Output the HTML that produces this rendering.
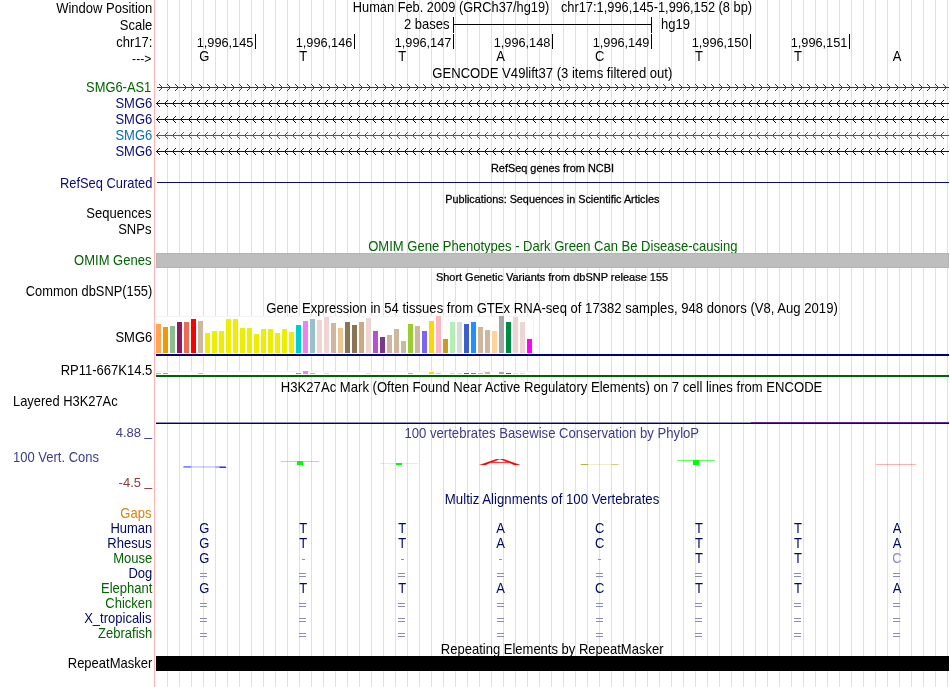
<!DOCTYPE html>
<html lang="en"><head><meta charset="utf-8"><title>UCSC Genome Browser - chr17:1,996,145-1,996,152</title>
<style>
html,body{margin:0;padding:0;background:#fff;}
body{width:950px;height:687px;overflow:hidden;}
svg{display:block;position:absolute;left:0;top:0;will-change:transform;}
text{font-family:"Liberation Sans", Arial, Helvetica, sans-serif;font-size:14px;white-space:pre;}
.r{text-anchor:end;}
.c{text-anchor:middle;}
.s{font-size:10px;stroke:#000;stroke-width:0.25px;}
.crisp{shape-rendering:crispEdges;}
</style></head><body>
<svg width="950" height="687" viewBox="0 0 950 687">
<rect x="0" y="0" width="950" height="687" fill="#fff"/>

<defs><clipPath id="dc"><rect x="156" y="0" width="793" height="687"/></clipPath></defs>
<g class="crisp" fill="#dcdcff">
<rect x="167" y="0" width="1" height="687"/>
<rect x="179" y="0" width="1" height="687"/>
<rect x="191" y="0" width="1" height="687"/>
<rect x="203" y="0" width="1" height="687"/>
<rect x="215" y="0" width="1" height="687"/>
<rect x="227" y="0" width="1" height="687"/>
<rect x="239" y="0" width="1" height="687"/>
<rect x="251" y="0" width="1" height="687"/>
<rect x="263" y="0" width="1" height="687"/>
<rect x="275" y="0" width="1" height="687"/>
<rect x="287" y="0" width="1" height="687"/>
<rect x="299" y="0" width="1" height="687"/>
<rect x="311" y="0" width="1" height="687"/>
<rect x="323" y="0" width="1" height="687"/>
<rect x="335" y="0" width="1" height="687"/>
<rect x="347" y="0" width="1" height="687"/>
<rect x="359" y="0" width="1" height="687"/>
<rect x="371" y="0" width="1" height="687"/>
<rect x="383" y="0" width="1" height="687"/>
<rect x="395" y="0" width="1" height="687"/>
<rect x="407" y="0" width="1" height="687"/>
<rect x="419" y="0" width="1" height="687"/>
<rect x="431" y="0" width="1" height="687"/>
<rect x="443" y="0" width="1" height="687"/>
<rect x="455" y="0" width="1" height="687"/>
<rect x="467" y="0" width="1" height="687"/>
<rect x="479" y="0" width="1" height="687"/>
<rect x="491" y="0" width="1" height="687"/>
<rect x="503" y="0" width="1" height="687"/>
<rect x="515" y="0" width="1" height="687"/>
<rect x="527" y="0" width="1" height="687"/>
<rect x="539" y="0" width="1" height="687"/>
<rect x="551" y="0" width="1" height="687"/>
<rect x="563" y="0" width="1" height="687"/>
<rect x="575" y="0" width="1" height="687"/>
<rect x="587" y="0" width="1" height="687"/>
<rect x="599" y="0" width="1" height="687"/>
<rect x="611" y="0" width="1" height="687"/>
<rect x="623" y="0" width="1" height="687"/>
<rect x="635" y="0" width="1" height="687"/>
<rect x="647" y="0" width="1" height="687"/>
<rect x="659" y="0" width="1" height="687"/>
<rect x="671" y="0" width="1" height="687"/>
<rect x="683" y="0" width="1" height="687"/>
<rect x="695" y="0" width="1" height="687"/>
<rect x="707" y="0" width="1" height="687"/>
<rect x="719" y="0" width="1" height="687"/>
<rect x="731" y="0" width="1" height="687"/>
<rect x="743" y="0" width="1" height="687"/>
<rect x="755" y="0" width="1" height="687"/>
<rect x="767" y="0" width="1" height="687"/>
<rect x="779" y="0" width="1" height="687"/>
<rect x="791" y="0" width="1" height="687"/>
<rect x="803" y="0" width="1" height="687"/>
<rect x="815" y="0" width="1" height="687"/>
<rect x="827" y="0" width="1" height="687"/>
<rect x="839" y="0" width="1" height="687"/>
<rect x="851" y="0" width="1" height="687"/>
<rect x="863" y="0" width="1" height="687"/>
<rect x="875" y="0" width="1" height="687"/>
<rect x="887" y="0" width="1" height="687"/>
<rect x="899" y="0" width="1" height="687"/>
<rect x="911" y="0" width="1" height="687"/>
<rect x="923" y="0" width="1" height="687"/>
<rect x="935" y="0" width="1" height="687"/>
<rect x="947" y="0" width="1" height="687"/>
</g>
<rect class="crisp" x="154" y="0" width="1" height="687" fill="#ffb4b4"/>
<text transform="translate(152.3 12.5) scale(0.93 1)" class="r">Window Position</text>
<text transform="translate(152.3 29.5) scale(0.93 1)" class="r">Scale</text>
<text transform="translate(152.3 47) scale(0.93 1)" class="r">chr17:</text>
<text transform="translate(151.3 63.3) scale(0.933 1)" class="r" style="font-size:13px">---&gt;</text>
<text transform="translate(352.78 12) scale(0.9164 1)">Human Feb. 2009 (GRCh37/hg19)</text>
<text transform="translate(560.9 12) scale(0.9176 1)">chr17:1,996,145-1,996,152 (8 bp)</text>
<text transform="translate(449.5 29.3) scale(0.93 1)" class="r">2 bases</text>
<text transform="translate(661 29.3) scale(0.93 1)">hg19</text>
<g class="crisp" fill="#000">
<rect x="453" y="17" width="1" height="16"/>
<rect x="651" y="17" width="1" height="16"/>
<rect x="453" y="24" width="199" height="1"/>
<rect x="255" y="34" width="1" height="15"/>
<rect x="354" y="34" width="1" height="15"/>
<rect x="453" y="34" width="1" height="15"/>
<rect x="552" y="34" width="1" height="15"/>
<rect x="651" y="34" width="1" height="15"/>
<rect x="750" y="34" width="1" height="15"/>
<rect x="849" y="34" width="1" height="15"/>
</g>
<text transform="translate(253.4 47.3) scale(0.982 1)" class="r" style="font-size:13px">1,996,145</text>
<text transform="translate(352.4 47.3) scale(0.982 1)" class="r" style="font-size:13px">1,996,146</text>
<text transform="translate(451.4 47.3) scale(0.982 1)" class="r" style="font-size:13px">1,996,147</text>
<text transform="translate(550.4 47.3) scale(0.982 1)" class="r" style="font-size:13px">1,996,148</text>
<text transform="translate(649.4 47.3) scale(0.982 1)" class="r" style="font-size:13px">1,996,149</text>
<text transform="translate(748.4 47.3) scale(0.982 1)" class="r" style="font-size:13px">1,996,150</text>
<text transform="translate(847.4 47.3) scale(0.982 1)" class="r" style="font-size:13px">1,996,151</text>
<text transform="translate(204.4 60.5) scale(0.93 1)" class="c">G</text>
<text transform="translate(303.2 60.5) scale(0.93 1)" class="c">T</text>
<text transform="translate(402.2 60.5) scale(0.93 1)" class="c">T</text>
<text transform="translate(500.5 60.5) scale(0.93 1)" class="c">A</text>
<text transform="translate(599.7 60.5) scale(0.93 1)" class="c">C</text>
<text transform="translate(698.9 60.5) scale(0.93 1)" class="c">T</text>
<text transform="translate(797.9 60.5) scale(0.93 1)" class="c">T</text>
<text transform="translate(897 60.5) scale(0.93 1)" class="c">A</text>
<text transform="translate(432.3 77.5) scale(0.9356 1)">GENCODE V49lift37 (3 items filtered out)</text>
<text transform="translate(151.3 92) scale(0.922 1)" class="r" style="fill:#006400">SMG6-AS1</text>
<rect class="crisp" x="157" y="87" width="792" height="1" fill="#006400"/>
<path clip-path="url(#dc)" d="M159.0 84L162.5 87.5L159.0 91M167.0 84L170.5 87.5L167.0 91M175.0 84L178.5 87.5L175.0 91M183.0 84L186.5 87.5L183.0 91M191.0 84L194.5 87.5L191.0 91M199.0 84L202.5 87.5L199.0 91M207.0 84L210.5 87.5L207.0 91M215.0 84L218.5 87.5L215.0 91M223.0 84L226.5 87.5L223.0 91M231.0 84L234.5 87.5L231.0 91M239.0 84L242.5 87.5L239.0 91M247.0 84L250.5 87.5L247.0 91M255.0 84L258.5 87.5L255.0 91M263.0 84L266.5 87.5L263.0 91M271.0 84L274.5 87.5L271.0 91M279.0 84L282.5 87.5L279.0 91M287.0 84L290.5 87.5L287.0 91M295.0 84L298.5 87.5L295.0 91M303.0 84L306.5 87.5L303.0 91M311.0 84L314.5 87.5L311.0 91M319.0 84L322.5 87.5L319.0 91M327.0 84L330.5 87.5L327.0 91M335.0 84L338.5 87.5L335.0 91M343.0 84L346.5 87.5L343.0 91M351.0 84L354.5 87.5L351.0 91M359.0 84L362.5 87.5L359.0 91M367.0 84L370.5 87.5L367.0 91M375.0 84L378.5 87.5L375.0 91M383.0 84L386.5 87.5L383.0 91M391.0 84L394.5 87.5L391.0 91M399.0 84L402.5 87.5L399.0 91M407.0 84L410.5 87.5L407.0 91M415.0 84L418.5 87.5L415.0 91M423.0 84L426.5 87.5L423.0 91M431.0 84L434.5 87.5L431.0 91M439.0 84L442.5 87.5L439.0 91M447.0 84L450.5 87.5L447.0 91M455.0 84L458.5 87.5L455.0 91M463.0 84L466.5 87.5L463.0 91M471.0 84L474.5 87.5L471.0 91M479.0 84L482.5 87.5L479.0 91M487.0 84L490.5 87.5L487.0 91M495.0 84L498.5 87.5L495.0 91M503.0 84L506.5 87.5L503.0 91M511.0 84L514.5 87.5L511.0 91M519.0 84L522.5 87.5L519.0 91M527.0 84L530.5 87.5L527.0 91M535.0 84L538.5 87.5L535.0 91M543.0 84L546.5 87.5L543.0 91M551.0 84L554.5 87.5L551.0 91M559.0 84L562.5 87.5L559.0 91M567.0 84L570.5 87.5L567.0 91M575.0 84L578.5 87.5L575.0 91M583.0 84L586.5 87.5L583.0 91M591.0 84L594.5 87.5L591.0 91M599.0 84L602.5 87.5L599.0 91M607.0 84L610.5 87.5L607.0 91M615.0 84L618.5 87.5L615.0 91M623.0 84L626.5 87.5L623.0 91M631.0 84L634.5 87.5L631.0 91M639.0 84L642.5 87.5L639.0 91M647.0 84L650.5 87.5L647.0 91M655.0 84L658.5 87.5L655.0 91M663.0 84L666.5 87.5L663.0 91M671.0 84L674.5 87.5L671.0 91M679.0 84L682.5 87.5L679.0 91M687.0 84L690.5 87.5L687.0 91M695.0 84L698.5 87.5L695.0 91M703.0 84L706.5 87.5L703.0 91M711.0 84L714.5 87.5L711.0 91M719.0 84L722.5 87.5L719.0 91M727.0 84L730.5 87.5L727.0 91M735.0 84L738.5 87.5L735.0 91M743.0 84L746.5 87.5L743.0 91M751.0 84L754.5 87.5L751.0 91M759.0 84L762.5 87.5L759.0 91M767.0 84L770.5 87.5L767.0 91M775.0 84L778.5 87.5L775.0 91M783.0 84L786.5 87.5L783.0 91M791.0 84L794.5 87.5L791.0 91M799.0 84L802.5 87.5L799.0 91M807.0 84L810.5 87.5L807.0 91M815.0 84L818.5 87.5L815.0 91M823.0 84L826.5 87.5L823.0 91M831.0 84L834.5 87.5L831.0 91M839.0 84L842.5 87.5L839.0 91M847.0 84L850.5 87.5L847.0 91M855.0 84L858.5 87.5L855.0 91M863.0 84L866.5 87.5L863.0 91M871.0 84L874.5 87.5L871.0 91M879.0 84L882.5 87.5L879.0 91M887.0 84L890.5 87.5L887.0 91M895.0 84L898.5 87.5L895.0 91M903.0 84L906.5 87.5L903.0 91M911.0 84L914.5 87.5L911.0 91M919.0 84L922.5 87.5L919.0 91M927.0 84L930.5 87.5L927.0 91M935.0 84L938.5 87.5L935.0 91M943.0 84L946.5 87.5L943.0 91" fill="none" stroke="#006400" stroke-width="1"/>
<text transform="translate(152.3 108) scale(0.93 1)" class="r" style="fill:#0c0c78">SMG6</text>
<rect class="crisp" x="156" y="103" width="793" height="1" fill="#0c0c78"/>
<path clip-path="url(#dc)" d="M160.0 100L156.5 103.5L160.0 107M168.0 100L164.5 103.5L168.0 107M176.0 100L172.5 103.5L176.0 107M184.0 100L180.5 103.5L184.0 107M192.0 100L188.5 103.5L192.0 107M200.0 100L196.5 103.5L200.0 107M208.0 100L204.5 103.5L208.0 107M216.0 100L212.5 103.5L216.0 107M224.0 100L220.5 103.5L224.0 107M232.0 100L228.5 103.5L232.0 107M240.0 100L236.5 103.5L240.0 107M248.0 100L244.5 103.5L248.0 107M256.0 100L252.5 103.5L256.0 107M264.0 100L260.5 103.5L264.0 107M272.0 100L268.5 103.5L272.0 107M280.0 100L276.5 103.5L280.0 107M288.0 100L284.5 103.5L288.0 107M296.0 100L292.5 103.5L296.0 107M304.0 100L300.5 103.5L304.0 107M312.0 100L308.5 103.5L312.0 107M320.0 100L316.5 103.5L320.0 107M328.0 100L324.5 103.5L328.0 107M336.0 100L332.5 103.5L336.0 107M344.0 100L340.5 103.5L344.0 107M352.0 100L348.5 103.5L352.0 107M360.0 100L356.5 103.5L360.0 107M368.0 100L364.5 103.5L368.0 107M376.0 100L372.5 103.5L376.0 107M384.0 100L380.5 103.5L384.0 107M392.0 100L388.5 103.5L392.0 107M400.0 100L396.5 103.5L400.0 107M408.0 100L404.5 103.5L408.0 107M416.0 100L412.5 103.5L416.0 107M424.0 100L420.5 103.5L424.0 107M432.0 100L428.5 103.5L432.0 107M440.0 100L436.5 103.5L440.0 107M448.0 100L444.5 103.5L448.0 107M456.0 100L452.5 103.5L456.0 107M464.0 100L460.5 103.5L464.0 107M472.0 100L468.5 103.5L472.0 107M480.0 100L476.5 103.5L480.0 107M488.0 100L484.5 103.5L488.0 107M496.0 100L492.5 103.5L496.0 107M504.0 100L500.5 103.5L504.0 107M512.0 100L508.5 103.5L512.0 107M520.0 100L516.5 103.5L520.0 107M528.0 100L524.5 103.5L528.0 107M536.0 100L532.5 103.5L536.0 107M544.0 100L540.5 103.5L544.0 107M552.0 100L548.5 103.5L552.0 107M560.0 100L556.5 103.5L560.0 107M568.0 100L564.5 103.5L568.0 107M576.0 100L572.5 103.5L576.0 107M584.0 100L580.5 103.5L584.0 107M592.0 100L588.5 103.5L592.0 107M600.0 100L596.5 103.5L600.0 107M608.0 100L604.5 103.5L608.0 107M616.0 100L612.5 103.5L616.0 107M624.0 100L620.5 103.5L624.0 107M632.0 100L628.5 103.5L632.0 107M640.0 100L636.5 103.5L640.0 107M648.0 100L644.5 103.5L648.0 107M656.0 100L652.5 103.5L656.0 107M664.0 100L660.5 103.5L664.0 107M672.0 100L668.5 103.5L672.0 107M680.0 100L676.5 103.5L680.0 107M688.0 100L684.5 103.5L688.0 107M696.0 100L692.5 103.5L696.0 107M704.0 100L700.5 103.5L704.0 107M712.0 100L708.5 103.5L712.0 107M720.0 100L716.5 103.5L720.0 107M728.0 100L724.5 103.5L728.0 107M736.0 100L732.5 103.5L736.0 107M744.0 100L740.5 103.5L744.0 107M752.0 100L748.5 103.5L752.0 107M760.0 100L756.5 103.5L760.0 107M768.0 100L764.5 103.5L768.0 107M776.0 100L772.5 103.5L776.0 107M784.0 100L780.5 103.5L784.0 107M792.0 100L788.5 103.5L792.0 107M800.0 100L796.5 103.5L800.0 107M808.0 100L804.5 103.5L808.0 107M816.0 100L812.5 103.5L816.0 107M824.0 100L820.5 103.5L824.0 107M832.0 100L828.5 103.5L832.0 107M840.0 100L836.5 103.5L840.0 107M848.0 100L844.5 103.5L848.0 107M856.0 100L852.5 103.5L856.0 107M864.0 100L860.5 103.5L864.0 107M872.0 100L868.5 103.5L872.0 107M880.0 100L876.5 103.5L880.0 107M888.0 100L884.5 103.5L888.0 107M896.0 100L892.5 103.5L896.0 107M904.0 100L900.5 103.5L904.0 107M912.0 100L908.5 103.5L912.0 107M920.0 100L916.5 103.5L920.0 107M928.0 100L924.5 103.5L928.0 107M936.0 100L932.5 103.5L936.0 107M944.0 100L940.5 103.5L944.0 107M952.0 100L948.5 103.5L952.0 107" fill="none" stroke="#0c0c78" stroke-width="1"/>
<text transform="translate(152.3 124) scale(0.93 1)" class="r" style="fill:#0c0c78">SMG6</text>
<rect class="crisp" x="156" y="119" width="793" height="1" fill="#0c0c78"/>
<path clip-path="url(#dc)" d="M160.0 116L156.5 119.5L160.0 123M168.0 116L164.5 119.5L168.0 123M176.0 116L172.5 119.5L176.0 123M184.0 116L180.5 119.5L184.0 123M192.0 116L188.5 119.5L192.0 123M200.0 116L196.5 119.5L200.0 123M208.0 116L204.5 119.5L208.0 123M216.0 116L212.5 119.5L216.0 123M224.0 116L220.5 119.5L224.0 123M232.0 116L228.5 119.5L232.0 123M240.0 116L236.5 119.5L240.0 123M248.0 116L244.5 119.5L248.0 123M256.0 116L252.5 119.5L256.0 123M264.0 116L260.5 119.5L264.0 123M272.0 116L268.5 119.5L272.0 123M280.0 116L276.5 119.5L280.0 123M288.0 116L284.5 119.5L288.0 123M296.0 116L292.5 119.5L296.0 123M304.0 116L300.5 119.5L304.0 123M312.0 116L308.5 119.5L312.0 123M320.0 116L316.5 119.5L320.0 123M328.0 116L324.5 119.5L328.0 123M336.0 116L332.5 119.5L336.0 123M344.0 116L340.5 119.5L344.0 123M352.0 116L348.5 119.5L352.0 123M360.0 116L356.5 119.5L360.0 123M368.0 116L364.5 119.5L368.0 123M376.0 116L372.5 119.5L376.0 123M384.0 116L380.5 119.5L384.0 123M392.0 116L388.5 119.5L392.0 123M400.0 116L396.5 119.5L400.0 123M408.0 116L404.5 119.5L408.0 123M416.0 116L412.5 119.5L416.0 123M424.0 116L420.5 119.5L424.0 123M432.0 116L428.5 119.5L432.0 123M440.0 116L436.5 119.5L440.0 123M448.0 116L444.5 119.5L448.0 123M456.0 116L452.5 119.5L456.0 123M464.0 116L460.5 119.5L464.0 123M472.0 116L468.5 119.5L472.0 123M480.0 116L476.5 119.5L480.0 123M488.0 116L484.5 119.5L488.0 123M496.0 116L492.5 119.5L496.0 123M504.0 116L500.5 119.5L504.0 123M512.0 116L508.5 119.5L512.0 123M520.0 116L516.5 119.5L520.0 123M528.0 116L524.5 119.5L528.0 123M536.0 116L532.5 119.5L536.0 123M544.0 116L540.5 119.5L544.0 123M552.0 116L548.5 119.5L552.0 123M560.0 116L556.5 119.5L560.0 123M568.0 116L564.5 119.5L568.0 123M576.0 116L572.5 119.5L576.0 123M584.0 116L580.5 119.5L584.0 123M592.0 116L588.5 119.5L592.0 123M600.0 116L596.5 119.5L600.0 123M608.0 116L604.5 119.5L608.0 123M616.0 116L612.5 119.5L616.0 123M624.0 116L620.5 119.5L624.0 123M632.0 116L628.5 119.5L632.0 123M640.0 116L636.5 119.5L640.0 123M648.0 116L644.5 119.5L648.0 123M656.0 116L652.5 119.5L656.0 123M664.0 116L660.5 119.5L664.0 123M672.0 116L668.5 119.5L672.0 123M680.0 116L676.5 119.5L680.0 123M688.0 116L684.5 119.5L688.0 123M696.0 116L692.5 119.5L696.0 123M704.0 116L700.5 119.5L704.0 123M712.0 116L708.5 119.5L712.0 123M720.0 116L716.5 119.5L720.0 123M728.0 116L724.5 119.5L728.0 123M736.0 116L732.5 119.5L736.0 123M744.0 116L740.5 119.5L744.0 123M752.0 116L748.5 119.5L752.0 123M760.0 116L756.5 119.5L760.0 123M768.0 116L764.5 119.5L768.0 123M776.0 116L772.5 119.5L776.0 123M784.0 116L780.5 119.5L784.0 123M792.0 116L788.5 119.5L792.0 123M800.0 116L796.5 119.5L800.0 123M808.0 116L804.5 119.5L808.0 123M816.0 116L812.5 119.5L816.0 123M824.0 116L820.5 119.5L824.0 123M832.0 116L828.5 119.5L832.0 123M840.0 116L836.5 119.5L840.0 123M848.0 116L844.5 119.5L848.0 123M856.0 116L852.5 119.5L856.0 123M864.0 116L860.5 119.5L864.0 123M872.0 116L868.5 119.5L872.0 123M880.0 116L876.5 119.5L880.0 123M888.0 116L884.5 119.5L888.0 123M896.0 116L892.5 119.5L896.0 123M904.0 116L900.5 119.5L904.0 123M912.0 116L908.5 119.5L912.0 123M920.0 116L916.5 119.5L920.0 123M928.0 116L924.5 119.5L928.0 123M936.0 116L932.5 119.5L936.0 123M944.0 116L940.5 119.5L944.0 123M952.0 116L948.5 119.5L952.0 123" fill="none" stroke="#0c0c78" stroke-width="1"/>
<text transform="translate(152.3 140) scale(0.93 1)" class="r" style="fill:#0a6eaa">SMG6</text>
<rect class="crisp" x="156" y="135" width="793" height="1" fill="#0a6eaa"/>
<path clip-path="url(#dc)" d="M160.0 132L156.5 135.5L160.0 139M168.0 132L164.5 135.5L168.0 139M176.0 132L172.5 135.5L176.0 139M184.0 132L180.5 135.5L184.0 139M192.0 132L188.5 135.5L192.0 139M200.0 132L196.5 135.5L200.0 139M208.0 132L204.5 135.5L208.0 139M216.0 132L212.5 135.5L216.0 139M224.0 132L220.5 135.5L224.0 139M232.0 132L228.5 135.5L232.0 139M240.0 132L236.5 135.5L240.0 139M248.0 132L244.5 135.5L248.0 139M256.0 132L252.5 135.5L256.0 139M264.0 132L260.5 135.5L264.0 139M272.0 132L268.5 135.5L272.0 139M280.0 132L276.5 135.5L280.0 139M288.0 132L284.5 135.5L288.0 139M296.0 132L292.5 135.5L296.0 139M304.0 132L300.5 135.5L304.0 139M312.0 132L308.5 135.5L312.0 139M320.0 132L316.5 135.5L320.0 139M328.0 132L324.5 135.5L328.0 139M336.0 132L332.5 135.5L336.0 139M344.0 132L340.5 135.5L344.0 139M352.0 132L348.5 135.5L352.0 139M360.0 132L356.5 135.5L360.0 139M368.0 132L364.5 135.5L368.0 139M376.0 132L372.5 135.5L376.0 139M384.0 132L380.5 135.5L384.0 139M392.0 132L388.5 135.5L392.0 139M400.0 132L396.5 135.5L400.0 139M408.0 132L404.5 135.5L408.0 139M416.0 132L412.5 135.5L416.0 139M424.0 132L420.5 135.5L424.0 139M432.0 132L428.5 135.5L432.0 139M440.0 132L436.5 135.5L440.0 139M448.0 132L444.5 135.5L448.0 139M456.0 132L452.5 135.5L456.0 139M464.0 132L460.5 135.5L464.0 139M472.0 132L468.5 135.5L472.0 139M480.0 132L476.5 135.5L480.0 139M488.0 132L484.5 135.5L488.0 139M496.0 132L492.5 135.5L496.0 139M504.0 132L500.5 135.5L504.0 139M512.0 132L508.5 135.5L512.0 139M520.0 132L516.5 135.5L520.0 139M528.0 132L524.5 135.5L528.0 139M536.0 132L532.5 135.5L536.0 139M544.0 132L540.5 135.5L544.0 139M552.0 132L548.5 135.5L552.0 139M560.0 132L556.5 135.5L560.0 139M568.0 132L564.5 135.5L568.0 139M576.0 132L572.5 135.5L576.0 139M584.0 132L580.5 135.5L584.0 139M592.0 132L588.5 135.5L592.0 139M600.0 132L596.5 135.5L600.0 139M608.0 132L604.5 135.5L608.0 139M616.0 132L612.5 135.5L616.0 139M624.0 132L620.5 135.5L624.0 139M632.0 132L628.5 135.5L632.0 139M640.0 132L636.5 135.5L640.0 139M648.0 132L644.5 135.5L648.0 139M656.0 132L652.5 135.5L656.0 139M664.0 132L660.5 135.5L664.0 139M672.0 132L668.5 135.5L672.0 139M680.0 132L676.5 135.5L680.0 139M688.0 132L684.5 135.5L688.0 139M696.0 132L692.5 135.5L696.0 139M704.0 132L700.5 135.5L704.0 139M712.0 132L708.5 135.5L712.0 139M720.0 132L716.5 135.5L720.0 139M728.0 132L724.5 135.5L728.0 139M736.0 132L732.5 135.5L736.0 139M744.0 132L740.5 135.5L744.0 139M752.0 132L748.5 135.5L752.0 139M760.0 132L756.5 135.5L760.0 139M768.0 132L764.5 135.5L768.0 139M776.0 132L772.5 135.5L776.0 139M784.0 132L780.5 135.5L784.0 139M792.0 132L788.5 135.5L792.0 139M800.0 132L796.5 135.5L800.0 139M808.0 132L804.5 135.5L808.0 139M816.0 132L812.5 135.5L816.0 139M824.0 132L820.5 135.5L824.0 139M832.0 132L828.5 135.5L832.0 139M840.0 132L836.5 135.5L840.0 139M848.0 132L844.5 135.5L848.0 139M856.0 132L852.5 135.5L856.0 139M864.0 132L860.5 135.5L864.0 139M872.0 132L868.5 135.5L872.0 139M880.0 132L876.5 135.5L880.0 139M888.0 132L884.5 135.5L888.0 139M896.0 132L892.5 135.5L896.0 139M904.0 132L900.5 135.5L904.0 139M912.0 132L908.5 135.5L912.0 139M920.0 132L916.5 135.5L920.0 139M928.0 132L924.5 135.5L928.0 139M936.0 132L932.5 135.5L936.0 139M944.0 132L940.5 135.5L944.0 139M952.0 132L948.5 135.5L952.0 139" fill="none" stroke="#0a6eaa" stroke-width="1"/>
<text transform="translate(152.3 156) scale(0.93 1)" class="r" style="fill:#0c0c78">SMG6</text>
<rect class="crisp" x="156" y="151" width="793" height="1" fill="#0c0c78"/>
<path clip-path="url(#dc)" d="M160.0 148L156.5 151.5L160.0 155M168.0 148L164.5 151.5L168.0 155M176.0 148L172.5 151.5L176.0 155M184.0 148L180.5 151.5L184.0 155M192.0 148L188.5 151.5L192.0 155M200.0 148L196.5 151.5L200.0 155M208.0 148L204.5 151.5L208.0 155M216.0 148L212.5 151.5L216.0 155M224.0 148L220.5 151.5L224.0 155M232.0 148L228.5 151.5L232.0 155M240.0 148L236.5 151.5L240.0 155M248.0 148L244.5 151.5L248.0 155M256.0 148L252.5 151.5L256.0 155M264.0 148L260.5 151.5L264.0 155M272.0 148L268.5 151.5L272.0 155M280.0 148L276.5 151.5L280.0 155M288.0 148L284.5 151.5L288.0 155M296.0 148L292.5 151.5L296.0 155M304.0 148L300.5 151.5L304.0 155M312.0 148L308.5 151.5L312.0 155M320.0 148L316.5 151.5L320.0 155M328.0 148L324.5 151.5L328.0 155M336.0 148L332.5 151.5L336.0 155M344.0 148L340.5 151.5L344.0 155M352.0 148L348.5 151.5L352.0 155M360.0 148L356.5 151.5L360.0 155M368.0 148L364.5 151.5L368.0 155M376.0 148L372.5 151.5L376.0 155M384.0 148L380.5 151.5L384.0 155M392.0 148L388.5 151.5L392.0 155M400.0 148L396.5 151.5L400.0 155M408.0 148L404.5 151.5L408.0 155M416.0 148L412.5 151.5L416.0 155M424.0 148L420.5 151.5L424.0 155M432.0 148L428.5 151.5L432.0 155M440.0 148L436.5 151.5L440.0 155M448.0 148L444.5 151.5L448.0 155M456.0 148L452.5 151.5L456.0 155M464.0 148L460.5 151.5L464.0 155M472.0 148L468.5 151.5L472.0 155M480.0 148L476.5 151.5L480.0 155M488.0 148L484.5 151.5L488.0 155M496.0 148L492.5 151.5L496.0 155M504.0 148L500.5 151.5L504.0 155M512.0 148L508.5 151.5L512.0 155M520.0 148L516.5 151.5L520.0 155M528.0 148L524.5 151.5L528.0 155M536.0 148L532.5 151.5L536.0 155M544.0 148L540.5 151.5L544.0 155M552.0 148L548.5 151.5L552.0 155M560.0 148L556.5 151.5L560.0 155M568.0 148L564.5 151.5L568.0 155M576.0 148L572.5 151.5L576.0 155M584.0 148L580.5 151.5L584.0 155M592.0 148L588.5 151.5L592.0 155M600.0 148L596.5 151.5L600.0 155M608.0 148L604.5 151.5L608.0 155M616.0 148L612.5 151.5L616.0 155M624.0 148L620.5 151.5L624.0 155M632.0 148L628.5 151.5L632.0 155M640.0 148L636.5 151.5L640.0 155M648.0 148L644.5 151.5L648.0 155M656.0 148L652.5 151.5L656.0 155M664.0 148L660.5 151.5L664.0 155M672.0 148L668.5 151.5L672.0 155M680.0 148L676.5 151.5L680.0 155M688.0 148L684.5 151.5L688.0 155M696.0 148L692.5 151.5L696.0 155M704.0 148L700.5 151.5L704.0 155M712.0 148L708.5 151.5L712.0 155M720.0 148L716.5 151.5L720.0 155M728.0 148L724.5 151.5L728.0 155M736.0 148L732.5 151.5L736.0 155M744.0 148L740.5 151.5L744.0 155M752.0 148L748.5 151.5L752.0 155M760.0 148L756.5 151.5L760.0 155M768.0 148L764.5 151.5L768.0 155M776.0 148L772.5 151.5L776.0 155M784.0 148L780.5 151.5L784.0 155M792.0 148L788.5 151.5L792.0 155M800.0 148L796.5 151.5L800.0 155M808.0 148L804.5 151.5L808.0 155M816.0 148L812.5 151.5L816.0 155M824.0 148L820.5 151.5L824.0 155M832.0 148L828.5 151.5L832.0 155M840.0 148L836.5 151.5L840.0 155M848.0 148L844.5 151.5L848.0 155M856.0 148L852.5 151.5L856.0 155M864.0 148L860.5 151.5L864.0 155M872.0 148L868.5 151.5L872.0 155M880.0 148L876.5 151.5L880.0 155M888.0 148L884.5 151.5L888.0 155M896.0 148L892.5 151.5L896.0 155M904.0 148L900.5 151.5L904.0 155M912.0 148L908.5 151.5L912.0 155M920.0 148L916.5 151.5L920.0 155M928.0 148L924.5 151.5L928.0 155M936.0 148L932.5 151.5L936.0 155M944.0 148L940.5 151.5L944.0 155M952.0 148L948.5 151.5L952.0 155" fill="none" stroke="#0c0c78" stroke-width="1"/>
<text transform="translate(491.0 172) scale(1.0906 1)" class="s">RefSeq genes from NCBI</text>
<text transform="translate(152.3 187.5) scale(0.921 1)" class="r" style="fill:#0c0c78">RefSeq Curated</text>
<rect class="crisp" x="157" y="182" width="792" height="1" fill="#0c0c78"/>
<text transform="translate(445.3 202.8) scale(1.084 1)" class="s">Publications: Sequences in Scientific Articles</text>
<text transform="translate(151.4 218) scale(0.93 1)" class="r">Sequences</text>
<text transform="translate(151.4 234) scale(0.93 1)" class="r">SNPs</text>
<text transform="translate(368.2 250.7) scale(0.9309 1)" style="fill:#046404">OMIM Gene Phenotypes - Dark Green Can Be Disease-causing</text>
<text transform="translate(151.4 265) scale(0.93 1)" class="r" style="fill:#046404">OMIM Genes</text>
<rect class="crisp" x="156" y="253" width="793" height="15" fill="#b4b4b4"/><rect class="crisp" x="157" y="254" width="791" height="13" fill="#bebebe"/>
<text transform="translate(435.9 281) scale(1.096 1)" class="s">Short Genetic Variants from dbSNP release 155</text>
<text transform="translate(152.3 296) scale(0.919 1)" class="r">Common dbSNP(155)</text>
<text transform="translate(266.3 312.6) scale(0.9367 1)">Gene Expression in 54 tissues from GTEx RNA-seq of 17382 samples, 948 donors (V8, Aug 2019)</text>
<text transform="translate(152.3 342.3) scale(0.93 1)" class="r">SMG6</text>
<text transform="translate(152.3 374.6) scale(0.93 1)" class="r">RP11-667K14.5</text>
<g class="crisp">
<rect x="156" y="316" width="378" height="38" fill="#f4f4f4"/><rect x="157" y="317" width="376" height="37" fill="#fff"/>
<rect x="156" y="324" width="5" height="29" fill="#FFA54F"/>
<rect x="163" y="327" width="5" height="26" fill="#EE9A00"/>
<rect x="170" y="326" width="5" height="27" fill="#8FBC8F"/>
<rect x="177" y="322" width="5" height="31" fill="#8B1C62"/>
<rect x="184" y="322" width="5" height="31" fill="#EE6A50"/>
<rect x="191" y="319" width="5" height="34" fill="#FF0000"/>
<rect x="198" y="321" width="5" height="32" fill="#CDB79E"/>
<rect x="205" y="333" width="5" height="20" fill="#EEEE00"/>
<rect x="212" y="331" width="5" height="22" fill="#EEEE00"/>
<rect x="219" y="331" width="5" height="22" fill="#EEEE00"/>
<rect x="226" y="319" width="5" height="34" fill="#EEEE00"/>
<rect x="233" y="319" width="5" height="34" fill="#EEEE00"/>
<rect x="240" y="328" width="5" height="25" fill="#EEEE00"/>
<rect x="247" y="328" width="5" height="25" fill="#EEEE00"/>
<rect x="254" y="334" width="5" height="19" fill="#EEEE00"/>
<rect x="261" y="329" width="5" height="24" fill="#EEEE00"/>
<rect x="268" y="329" width="5" height="24" fill="#EEEE00"/>
<rect x="275" y="333" width="5" height="20" fill="#EEEE00"/>
<rect x="282" y="329" width="5" height="24" fill="#EEEE00"/>
<rect x="289" y="332" width="5" height="21" fill="#EEEE00"/>
<rect x="296" y="325" width="5" height="28" fill="#00CDCD"/>
<rect x="303" y="321" width="5" height="32" fill="#EE82EE"/>
<rect x="310" y="319" width="5" height="34" fill="#9AC0CD"/>
<rect x="317" y="320" width="5" height="33" fill="#EED5D2"/>
<rect x="324" y="317" width="5" height="36" fill="#EED5D2"/>
<rect x="331" y="323" width="5" height="30" fill="#CDB79E"/>
<rect x="338" y="328" width="5" height="25" fill="#EEC591"/>
<rect x="345" y="322" width="5" height="31" fill="#8B7355"/>
<rect x="352" y="325" width="5" height="28" fill="#8B7355"/>
<rect x="359" y="322" width="5" height="31" fill="#CDAA7D"/>
<rect x="366" y="318" width="5" height="35" fill="#EED5D2"/>
<rect x="373" y="331" width="5" height="22" fill="#B452CD"/>
<rect x="380" y="337" width="5" height="16" fill="#7A378B"/>
<rect x="387" y="335" width="5" height="18" fill="#CDB79E"/>
<rect x="394" y="329" width="5" height="24" fill="#CDB79E"/>
<rect x="401" y="341" width="5" height="12" fill="#CDB79E"/>
<rect x="408" y="324" width="5" height="29" fill="#9ACD32"/>
<rect x="415" y="326" width="5" height="27" fill="#CDB79E"/>
<rect x="422" y="331" width="5" height="22" fill="#7A67EE"/>
<rect x="429" y="321" width="5" height="32" fill="#FFD700"/>
<rect x="436" y="316" width="5" height="37" fill="#FFB6C1"/>
<rect x="443" y="339" width="5" height="14" fill="#CD9B1D"/>
<rect x="450" y="322" width="5" height="31" fill="#B4EEB4"/>
<rect x="457" y="322" width="5" height="31" fill="#D9D9D9"/>
<rect x="464" y="324" width="5" height="29" fill="#3A5FCD"/>
<rect x="471" y="322" width="5" height="31" fill="#1E90FF"/>
<rect x="478" y="327" width="5" height="26" fill="#CDB79E"/>
<rect x="485" y="330" width="5" height="23" fill="#CDB79E"/>
<rect x="492" y="331" width="5" height="22" fill="#FFD39B"/>
<rect x="499" y="316" width="5" height="37" fill="#A6A6A6"/>
<rect x="506" y="322" width="5" height="31" fill="#008B45"/>
<rect x="513" y="317" width="5" height="36" fill="#EED5D2"/>
<rect x="520" y="322" width="5" height="31" fill="#EED5D2"/>
<rect x="527" y="339" width="5" height="14" fill="#FF00FF"/>
<rect x="156" y="354" width="793" height="2" fill="#000078"/>
<rect x="156" y="371" width="378" height="4" fill="#f4f4f4"/><rect x="157" y="372" width="376" height="3" fill="#fff"/>
<rect x="156" y="373" width="5" height="1" fill="#FFA54F"/>
<rect x="163" y="373" width="5" height="1" fill="#EE9A00"/>
<rect x="198" y="373" width="5" height="1" fill="#CDB79E"/>
<rect x="296" y="373" width="5" height="1" fill="#00CDCD"/>
<rect x="303" y="371" width="5" height="3" fill="#EE82EE"/>
<rect x="310" y="373" width="5" height="1" fill="#9AC0CD"/>
<rect x="324" y="373" width="5" height="1" fill="#EED5D2"/>
<rect x="366" y="373" width="5" height="1" fill="#EED5D2"/>
<rect x="408" y="373" width="5" height="1" fill="#9ACD32"/>
<rect x="429" y="372" width="5" height="2" fill="#FFD700"/>
<rect x="436" y="373" width="5" height="1" fill="#FFB6C1"/>
<rect x="450" y="373" width="5" height="1" fill="#B4EEB4"/>
<rect x="457" y="373" width="5" height="1" fill="#D9D9D9"/>
<rect x="464" y="373" width="5" height="1" fill="#3A5FCD"/>
<rect x="471" y="373" width="5" height="1" fill="#1E90FF"/>
<rect x="478" y="373" width="5" height="1" fill="#CDB79E"/>
<rect x="485" y="372" width="5" height="2" fill="#CDB79E"/>
<rect x="499" y="372" width="5" height="2" fill="#A6A6A6"/>
<rect x="506" y="373" width="5" height="1" fill="#008B45"/>
<rect x="513" y="373" width="5" height="1" fill="#EED5D2"/>
<rect x="520" y="373" width="5" height="1" fill="#EED5D2"/>
<rect x="156" y="375" width="793" height="2" fill="#006400"/>
</g>
<text transform="translate(280.86 391.6) scale(0.9365 1)">H3K27Ac Mark (Often Found Near Active Regulatory Elements) on 7 cell lines from ENCODE</text>
<text transform="translate(13 406) scale(0.922 1)">Layered H3K27Ac</text>
<g class="crisp">
<rect x="156" y="422" width="595" height="1" fill="#8c8cb4"/>
<rect x="751" y="422" width="198" height="1" fill="#6428a0"/>
<rect x="156" y="423" width="793" height="1" fill="#0f0524"/>
</g>
<text transform="translate(404.46 437.7) scale(0.9379 1)" style="fill:#3c3c8c">100 vertebrates Basewise Conservation by PhyloP</text>
<text transform="translate(141 436.9) scale(1.0 1)" class="r" style="fill:#3c3c8c;font-size:13px">4.88</text>
<text transform="translate(152.2 436.4) scale(0.98 1)" class="r" style="fill:#3c3c8c">_</text>
<text transform="translate(13 462) scale(0.93 1)" style="fill:#3c3c8c">100 Vert. Cons</text>
<text transform="translate(141 486.7) scale(1.0 1)" class="r" style="fill:#8c3c3c;font-size:13px">-4.5</text>
<text transform="translate(152.2 486.4) scale(0.98 1)" class="r" style="fill:#8c3c3c">_</text>
<g class="crisp">
</g><g>
<rect x="183.5" y="466.3" width="42" height="1.3" fill="#0000ff" fill-opacity="0.25"/>
<rect x="183.2" y="466.3" width="8" height="1.3" rx="0.6" fill="#0000ff" fill-opacity="0.5"/>
<rect x="216" y="466.4" width="10" height="1.2" rx="0.6" fill="#0000ff" fill-opacity="0.35"/>
<rect x="219.5" y="466.8" width="6.7" height="1.2" rx="0.5" fill="#0000ff" fill-opacity="0.75"/>
</g><g class="crisp">
<rect x="281" y="461" width="38" height="1" fill="#00ff00" fill-opacity="0.5"/>
<rect x="297" y="461" width="6" height="4" fill="#00ff00"/>
<rect x="380" y="463" width="38" height="1" fill="#00ff00" fill-opacity="0.22"/>
<rect x="396" y="463" width="6" height="2" fill="#00ff00"/>
<rect x="580" y="464" width="40" height="1" fill="#a0a000" fill-opacity="0.2"/>
<rect x="581" y="464" width="7" height="1" fill="#a0a000" fill-opacity="0.7"/>
<rect x="612" y="464" width="6" height="1" fill="#a0a000" fill-opacity="0.4"/>
<rect x="677" y="460" width="38" height="1" fill="#00ff00" fill-opacity="0.6"/>
<rect x="693" y="460" width="6" height="5" fill="#00ff00"/>
<rect x="876" y="464" width="40" height="1" fill="#ff0000" fill-opacity="0.3"/>
</g>
<text transform="translate(499.8,465) scale(6.1,0.84)" x="0" y="0" class="c" style="font-size:10px;fill:#ff0000;stroke:#ff0000;stroke-width:0.5px;vector-effect:non-scaling-stroke">A</text>
<text transform="translate(444.86 503.7) scale(0.9436 1)" style="fill:#000a64">Multiz Alignments of 100 Vertebrates</text>
<text transform="translate(151.4 518) scale(0.93 1)" class="r" style="fill:#dc8208">Gaps</text>
<text transform="translate(152.3 533) scale(0.93 1)" class="r" style="fill:#000a64">Human</text>
<text transform="translate(204.4 533) scale(0.93 1)" class="c" style="fill:#000a64">G</text>
<text transform="translate(303.2 533) scale(0.93 1)" class="c" style="fill:#000a64">T</text>
<text transform="translate(402.2 533) scale(0.93 1)" class="c" style="fill:#000a64">T</text>
<text transform="translate(500.5 533) scale(0.93 1)" class="c" style="fill:#000a64">A</text>
<text transform="translate(599.7 533) scale(0.93 1)" class="c" style="fill:#000a64">C</text>
<text transform="translate(698.9 533) scale(0.93 1)" class="c" style="fill:#000a64">T</text>
<text transform="translate(797.9 533) scale(0.93 1)" class="c" style="fill:#000a64">T</text>
<text transform="translate(897 533) scale(0.93 1)" class="c" style="fill:#000a64">A</text>
<text transform="translate(151.4 548) scale(0.93 1)" class="r" style="fill:#000a64">Rhesus</text>
<text transform="translate(204.4 548) scale(0.93 1)" class="c" style="fill:#000a64">G</text>
<text transform="translate(303.2 548) scale(0.93 1)" class="c" style="fill:#000a64">T</text>
<text transform="translate(402.2 548) scale(0.93 1)" class="c" style="fill:#000a64">T</text>
<text transform="translate(500.5 548) scale(0.93 1)" class="c" style="fill:#000a64">A</text>
<text transform="translate(599.7 548) scale(0.93 1)" class="c" style="fill:#000a64">C</text>
<text transform="translate(698.9 548) scale(0.93 1)" class="c" style="fill:#000a64">T</text>
<text transform="translate(797.9 548) scale(0.93 1)" class="c" style="fill:#000a64">T</text>
<text transform="translate(897 548) scale(0.93 1)" class="c" style="fill:#000a64">A</text>
<text transform="translate(152.3 563) scale(0.93 1)" class="r" style="fill:#046404">Mouse</text>
<text transform="translate(204.4 563) scale(0.93 1)" class="c" style="fill:#000a64">G</text>
<rect class="crisp" x="302" y="559" width="3" height="1" fill="#8c8cb4"/>
<rect class="crisp" x="401" y="559" width="3" height="1" fill="#8c8cb4"/>
<rect class="crisp" x="499" y="559" width="3" height="1" fill="#8c8cb4"/>
<rect class="crisp" x="598" y="559" width="3" height="1" fill="#8c8cb4"/>
<text transform="translate(698.9 563) scale(0.93 1)" class="c" style="fill:#000a64">T</text>
<text transform="translate(797.9 563) scale(0.93 1)" class="c" style="fill:#000a64">T</text>
<text transform="translate(897 563) scale(0.93 1)" class="c" style="fill:#8c8cb4">C</text>
<text transform="translate(152.3 578) scale(0.93 1)" class="r" style="fill:#000a64">Dog</text>
<rect class="crisp" x="200" y="573" width="7" height="1" fill="#8c8cb4"/><rect class="crisp" x="200" y="576" width="7" height="1" fill="#8c8cb4"/>
<rect class="crisp" x="299" y="573" width="7" height="1" fill="#8c8cb4"/><rect class="crisp" x="299" y="576" width="7" height="1" fill="#8c8cb4"/>
<rect class="crisp" x="398" y="573" width="7" height="1" fill="#8c8cb4"/><rect class="crisp" x="398" y="576" width="7" height="1" fill="#8c8cb4"/>
<rect class="crisp" x="497" y="573" width="7" height="1" fill="#8c8cb4"/><rect class="crisp" x="497" y="576" width="7" height="1" fill="#8c8cb4"/>
<rect class="crisp" x="596" y="573" width="7" height="1" fill="#8c8cb4"/><rect class="crisp" x="596" y="576" width="7" height="1" fill="#8c8cb4"/>
<rect class="crisp" x="695" y="573" width="7" height="1" fill="#8c8cb4"/><rect class="crisp" x="695" y="576" width="7" height="1" fill="#8c8cb4"/>
<rect class="crisp" x="794" y="573" width="7" height="1" fill="#8c8cb4"/><rect class="crisp" x="794" y="576" width="7" height="1" fill="#8c8cb4"/>
<rect class="crisp" x="893" y="573" width="7" height="1" fill="#8c8cb4"/><rect class="crisp" x="893" y="576" width="7" height="1" fill="#8c8cb4"/>
<text transform="translate(152.3 593) scale(0.93 1)" class="r" style="fill:#046404">Elephant</text>
<text transform="translate(204.4 593) scale(0.93 1)" class="c" style="fill:#000a64">G</text>
<text transform="translate(303.2 593) scale(0.93 1)" class="c" style="fill:#000a64">T</text>
<text transform="translate(402.2 593) scale(0.93 1)" class="c" style="fill:#000a64">T</text>
<text transform="translate(500.5 593) scale(0.93 1)" class="c" style="fill:#000a64">A</text>
<text transform="translate(599.7 593) scale(0.93 1)" class="c" style="fill:#000a64">C</text>
<text transform="translate(698.9 593) scale(0.93 1)" class="c" style="fill:#000a64">T</text>
<text transform="translate(797.9 593) scale(0.93 1)" class="c" style="fill:#000a64">T</text>
<text transform="translate(897 593) scale(0.93 1)" class="c" style="fill:#000a64">A</text>
<text transform="translate(152.3 608) scale(0.93 1)" class="r" style="fill:#046404">Chicken</text>
<rect class="crisp" x="200" y="603" width="7" height="1" fill="#8c8cb4"/><rect class="crisp" x="200" y="606" width="7" height="1" fill="#8c8cb4"/>
<rect class="crisp" x="299" y="603" width="7" height="1" fill="#8c8cb4"/><rect class="crisp" x="299" y="606" width="7" height="1" fill="#8c8cb4"/>
<rect class="crisp" x="398" y="603" width="7" height="1" fill="#8c8cb4"/><rect class="crisp" x="398" y="606" width="7" height="1" fill="#8c8cb4"/>
<rect class="crisp" x="497" y="603" width="7" height="1" fill="#8c8cb4"/><rect class="crisp" x="497" y="606" width="7" height="1" fill="#8c8cb4"/>
<rect class="crisp" x="596" y="603" width="7" height="1" fill="#8c8cb4"/><rect class="crisp" x="596" y="606" width="7" height="1" fill="#8c8cb4"/>
<rect class="crisp" x="695" y="603" width="7" height="1" fill="#8c8cb4"/><rect class="crisp" x="695" y="606" width="7" height="1" fill="#8c8cb4"/>
<rect class="crisp" x="794" y="603" width="7" height="1" fill="#8c8cb4"/><rect class="crisp" x="794" y="606" width="7" height="1" fill="#8c8cb4"/>
<rect class="crisp" x="893" y="603" width="7" height="1" fill="#8c8cb4"/><rect class="crisp" x="893" y="606" width="7" height="1" fill="#8c8cb4"/>
<text transform="translate(151.4 623) scale(0.93 1)" class="r" style="fill:#000a64">X_tropicalis</text>
<rect class="crisp" x="200" y="618" width="7" height="1" fill="#8c8cb4"/><rect class="crisp" x="200" y="621" width="7" height="1" fill="#8c8cb4"/>
<rect class="crisp" x="299" y="618" width="7" height="1" fill="#8c8cb4"/><rect class="crisp" x="299" y="621" width="7" height="1" fill="#8c8cb4"/>
<rect class="crisp" x="398" y="618" width="7" height="1" fill="#8c8cb4"/><rect class="crisp" x="398" y="621" width="7" height="1" fill="#8c8cb4"/>
<rect class="crisp" x="497" y="618" width="7" height="1" fill="#8c8cb4"/><rect class="crisp" x="497" y="621" width="7" height="1" fill="#8c8cb4"/>
<rect class="crisp" x="596" y="618" width="7" height="1" fill="#8c8cb4"/><rect class="crisp" x="596" y="621" width="7" height="1" fill="#8c8cb4"/>
<rect class="crisp" x="695" y="618" width="7" height="1" fill="#8c8cb4"/><rect class="crisp" x="695" y="621" width="7" height="1" fill="#8c8cb4"/>
<rect class="crisp" x="794" y="618" width="7" height="1" fill="#8c8cb4"/><rect class="crisp" x="794" y="621" width="7" height="1" fill="#8c8cb4"/>
<rect class="crisp" x="893" y="618" width="7" height="1" fill="#8c8cb4"/><rect class="crisp" x="893" y="621" width="7" height="1" fill="#8c8cb4"/>
<text transform="translate(152.3 638) scale(0.93 1)" class="r" style="fill:#046404">Zebrafish</text>
<rect class="crisp" x="200" y="633" width="7" height="1" fill="#8c8cb4"/><rect class="crisp" x="200" y="636" width="7" height="1" fill="#8c8cb4"/>
<rect class="crisp" x="299" y="633" width="7" height="1" fill="#8c8cb4"/><rect class="crisp" x="299" y="636" width="7" height="1" fill="#8c8cb4"/>
<rect class="crisp" x="398" y="633" width="7" height="1" fill="#8c8cb4"/><rect class="crisp" x="398" y="636" width="7" height="1" fill="#8c8cb4"/>
<rect class="crisp" x="497" y="633" width="7" height="1" fill="#8c8cb4"/><rect class="crisp" x="497" y="636" width="7" height="1" fill="#8c8cb4"/>
<rect class="crisp" x="596" y="633" width="7" height="1" fill="#8c8cb4"/><rect class="crisp" x="596" y="636" width="7" height="1" fill="#8c8cb4"/>
<rect class="crisp" x="695" y="633" width="7" height="1" fill="#8c8cb4"/><rect class="crisp" x="695" y="636" width="7" height="1" fill="#8c8cb4"/>
<rect class="crisp" x="794" y="633" width="7" height="1" fill="#8c8cb4"/><rect class="crisp" x="794" y="636" width="7" height="1" fill="#8c8cb4"/>
<rect class="crisp" x="893" y="633" width="7" height="1" fill="#8c8cb4"/><rect class="crisp" x="893" y="636" width="7" height="1" fill="#8c8cb4"/>
<text transform="translate(440.87 653.7) scale(0.93 1)">Repeating Elements by RepeatMasker</text>
<text transform="translate(152.3 668) scale(0.93 1)" class="r">RepeatMasker</text>
<rect class="crisp" x="156" y="656" width="793" height="15" fill="#000"/>
</svg></body></html>
